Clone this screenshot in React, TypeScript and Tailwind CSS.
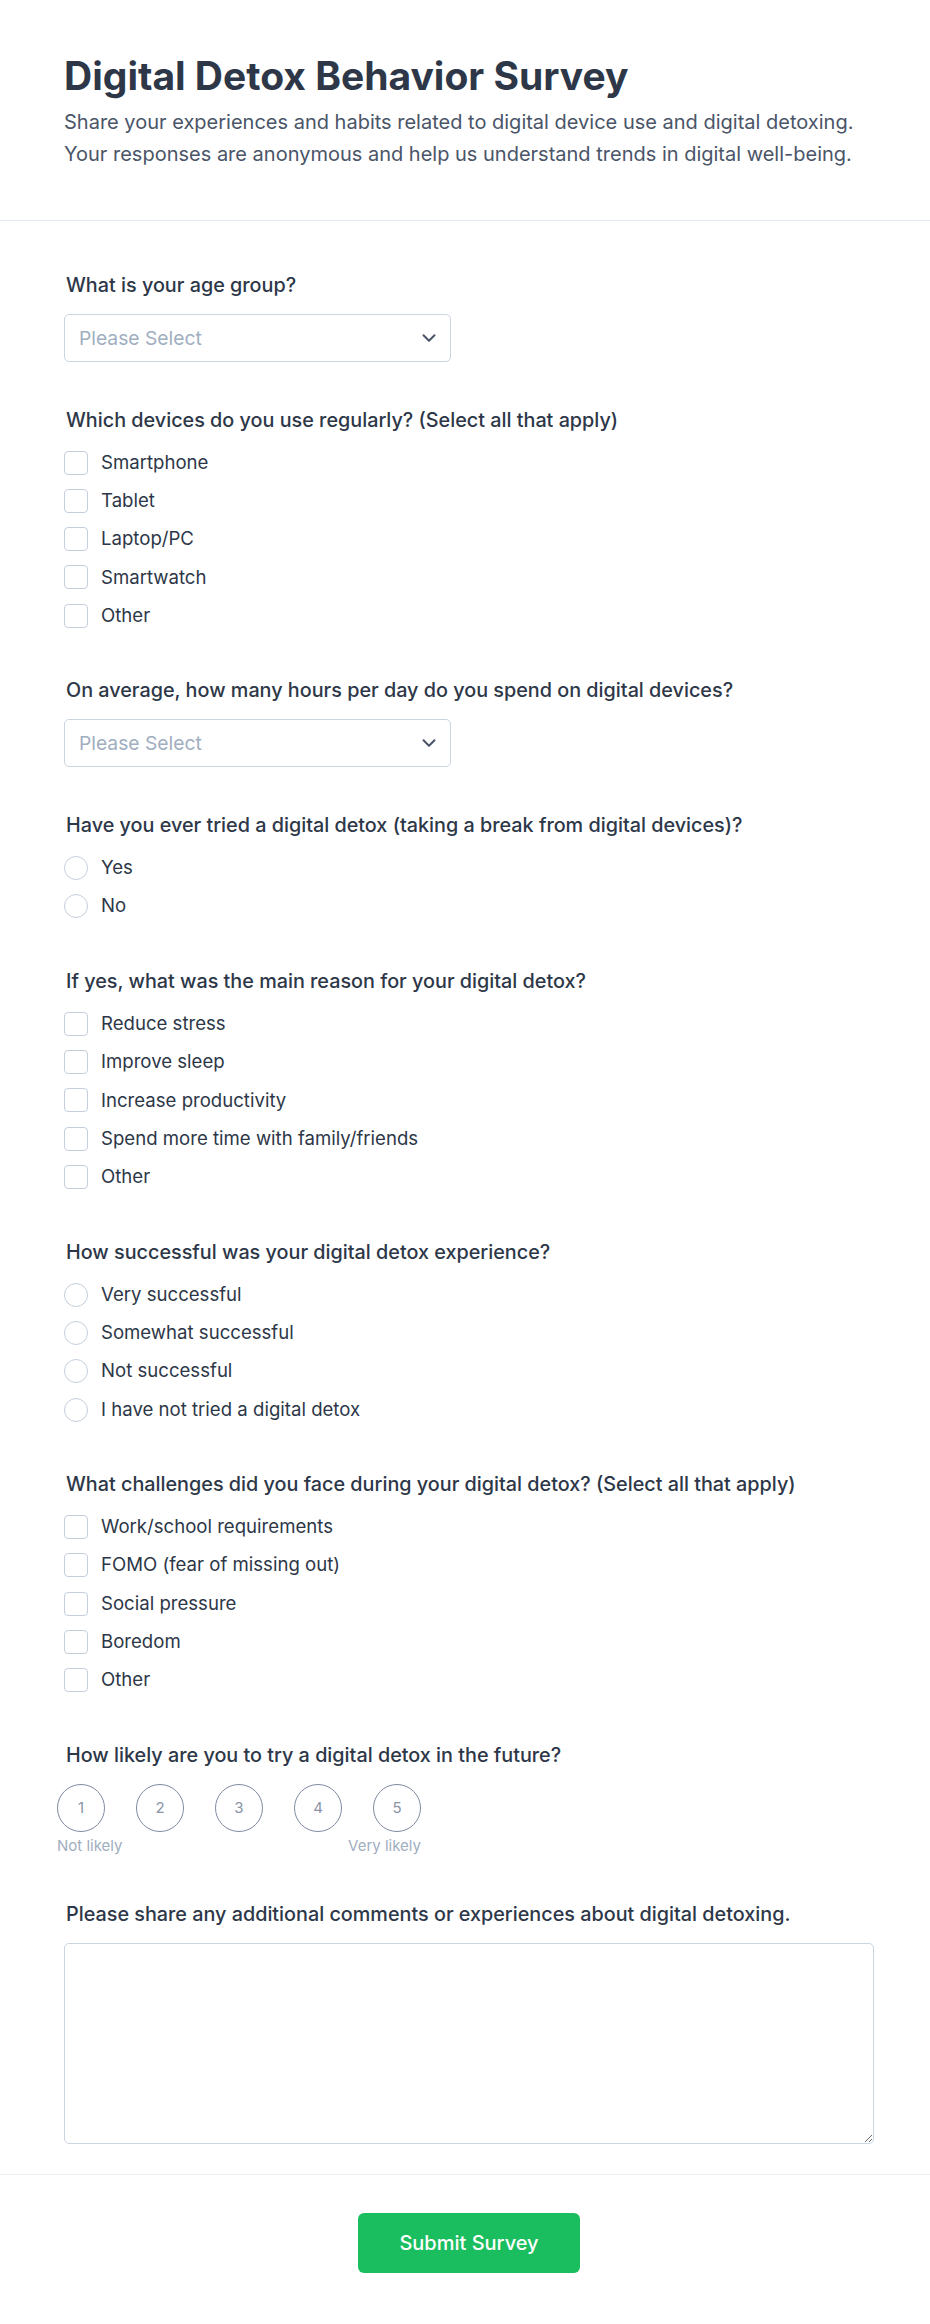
import React from "react";
import { ChevronDown } from "lucide-react";

const Label = ({ children }: { children: React.ReactNode }) => (
  <div className="mb-[15px] pl-[2px] text-[19.8px] leading-[28px] font-medium text-[#2d3748]">{children}</div>
);

const Select = () => (
  <div className="flex h-[48px] w-[387px] items-center justify-between rounded-[5px] border border-[#cbd5e0] bg-white pl-[14px] pr-[10px]">
    <span className="text-[19.25px] text-[#a0aec0]">Please Select</span>
    <ChevronDown size={22} strokeWidth={2.2} className="text-[#4a5568]" />
  </div>
);

const Checks = ({ items }: { items: string[] }) => (
  <div className="flex flex-col gap-[10.3px] pb-[3px]">
    {items.map((t) => (
      <div key={t} className="flex h-[28px] items-center gap-[13px]">
        <span className="size-[24px] shrink-0 rounded-[4px] border border-[#c5cedb] bg-white" />
        <span className="text-[18.6px] text-[#2d3748]">{t}</span>
      </div>
    ))}
  </div>
);

const Radios = ({ items }: { items: string[] }) => (
  <div className="flex flex-col gap-[10.3px] pb-[3px]">
    {items.map((t) => (
      <div key={t} className="flex h-[28px] items-center gap-[13px]">
        <span className="size-[24px] shrink-0 rounded-full border border-[#c5cedb] bg-white" />
        <span className="text-[18.6px] text-[#2d3748]">{t}</span>
      </div>
    ))}
  </div>
);

export default function App() {
  return (
    <div className="min-h-[2324px] bg-white font-['Inter',sans-serif]">
      <header className="border-b border-[#e2e8f0] pb-[50px] pl-[64px] pr-[56px] pt-[56px]">
        <h1 className="text-[39px] font-bold leading-[40px] text-[#2d3748]">Digital Detox Behavior Survey</h1>
        <p className="mt-[10px] text-[20px] leading-[32px] text-[#4a5568]">
          <span className="block">Share your experiences and habits related to digital device use and digital detoxing.</span>
          <span className="block">Your responses are anonymous and help us understand trends in digital well-being.</span>
        </p>
      </header>

      <main className="flex flex-col gap-[43.6px] pb-[30px] pl-[64px] pr-[56px] pt-[50px]">
        <section>
          <Label>What is your age group?</Label>
          <Select />
        </section>
        <section>
          <Label>Which devices do you use regularly? (Select all that apply)</Label>
          <Checks items={["Smartphone", "Tablet", "Laptop/PC", "Smartwatch", "Other"]} />
        </section>
        <section>
          <Label>On average, how many hours per day do you spend on digital devices?</Label>
          <Select />
        </section>
        <section>
          <Label>Have you ever tried a digital detox (taking a break from digital devices)?</Label>
          <Radios items={["Yes", "No"]} />
        </section>
        <section>
          <Label>If yes, what was the main reason for your digital detox?</Label>
          <Checks
            items={["Reduce stress", "Improve sleep", "Increase productivity", "Spend more time with family/friends", "Other"]}
          />
        </section>
        <section>
          <Label>How successful was your digital detox experience?</Label>
          <Radios items={["Very successful", "Somewhat successful", "Not successful", "I have not tried a digital detox"]} />
        </section>
        <section>
          <Label>What challenges did you face during your digital detox? (Select all that apply)</Label>
          <Checks
            items={["Work/school requirements", "FOMO (fear of missing out)", "Social pressure", "Boredom", "Other"]}
          />
        </section>
        <section>
          <Label>How likely are you to try a digital detox in the future?</Label>
          <div className="ml-[-7px] w-fit">
            <div className="flex gap-[31px]">
              {[1, 2, 3, 4, 5].map((n) => (
                <div
                  key={n}
                  className="flex size-[48px] items-center justify-center rounded-full border border-[#7f8ba0] bg-white text-[15px] text-[#8a94a6]"
                >
                  {n}
                </div>
              ))}
            </div>
            <div className="mt-[4px] flex justify-between text-[15px] leading-[20px] text-[#a0aec0]">
              <span>Not likely</span>
              <span>Very likely</span>
            </div>
          </div>
        </section>
        <section>
          <Label>Please share any additional comments or experiences about digital detoxing.</Label>
          <textarea className="block h-[201px] w-full rounded-[5px] border border-[#cbd5e0] bg-white" />
        </section>
      </main>

      <footer className="flex justify-center border-t border-[#edf2f7] pb-[50px] pl-[64px] pr-[56px] pt-[38px]">
        <button className="h-[60px] w-[222px] rounded-[6px] bg-[#1abe5f] text-[20px] font-medium text-white">
          Submit Survey
        </button>
      </footer>
    </div>
  );
}
